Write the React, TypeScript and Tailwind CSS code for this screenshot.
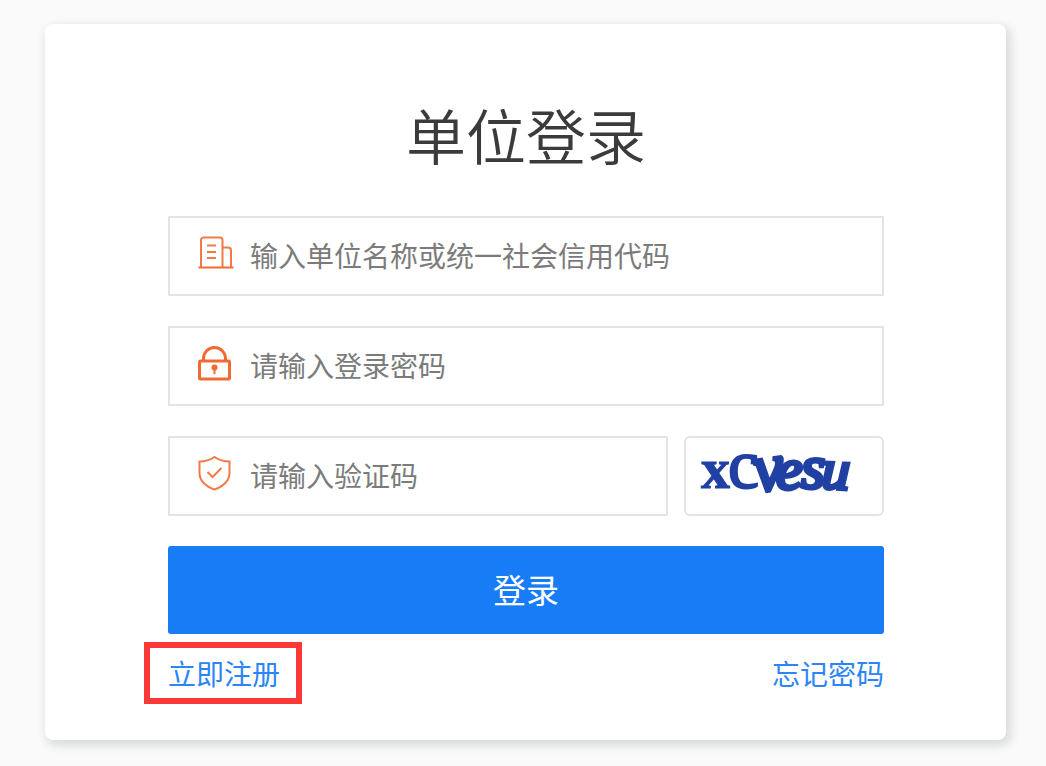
import type { ReactNode } from "react";

function BuildingIcon() {
  return (
    <svg width="36" height="36" viewBox="0 0 36 36" fill="none" stroke="#f27a47" strokeWidth="2" aria-hidden="true">
      <path d="M3 32V4a2.500 2.500 0 0 1 2.500-2.500H22a2.500 2.500 0 0 1 2.500 2.500V32" />
      <path d="M24.500 11.500H30a3 3 0 0 1 3 3v17" />
      <path d="M9 9.500h9M9 16h9M9 22h9" />
      <path d="M.500 31.500h35" stroke="#f26a32" />
    </svg>
  );
}

function LockIcon() {
  return (
    <svg width="36" height="36" viewBox="0 0 36 36" fill="none" stroke="#f26a32" strokeWidth="3" aria-hidden="true">
      <rect x="1.500" y="15" width="30" height="18" rx="1" />
      <path d="M5.500 14.500v-2a11 11 0 0 1 22 0v2" />
      <circle cx="16.500" cy="21.500" r="3" fill="#f26a32" stroke="none" />
      <path d="M16.500 21.500v6.500" strokeWidth="2" />
    </svg>
  );
}

function ShieldIcon() {
  return (
    <svg width="36" height="36" viewBox="0 0 36 36" fill="none" stroke="#f27a47" strokeWidth="2" aria-hidden="true">
      <path d="M16.500 1C12 4 7 5.500 1.500 5.500V17c0 8 7 13.500 15 16.500 8-3 15-8.500 15-16.500V5.500c-5.500 0-10.500-1.500-15-4.500Z" />
      <path d="m9.500 16 5 5 9-9" />
    </svg>
  );
}

function Captcha() {
  return (
    <svg
      className="h-full w-full overflow-visible font-['Liberation_Serif',serif] font-bold"
      viewBox="0 0 196 76"
      fill="#2140a3"
      stroke="#2140a3"
      role="img"
      aria-label="xcvesu"
    >
      <text x="15" y="50" fontSize="58">x</text>
      <text x="42" y="50" fontSize="70" className="font-normal" strokeWidth="2">c</text>
      <text x="70" y="54" fontSize="68" fontStyle="italic" className="font-normal" strokeWidth="4" transform="rotate(-8 70 54)">v</text>
      <text x="90" y="51" fontSize="60" fontStyle="italic" className="font-normal" strokeWidth="4">e</text>
      <text x="115" y="50" fontSize="62" fontStyle="italic" className="font-normal" strokeWidth="4">s</text>
      <text x="135" y="50" fontSize="56" fontStyle="italic" className="font-normal" strokeWidth="4" transform="rotate(3 135 50)">u</text>
    </svg>
  );
}

type FieldProps = {
  id: string;
  type?: string;
  label: string;
  icon: ReactNode;
};

function Field({ id, type = "text", label, icon }: FieldProps) {
  return (
    <div className="flex h-20 min-w-0 flex-1 items-center border-2 border-[#e4e4e4] pl-7">
      <label htmlFor={id} aria-label={label} className="w-[52px] shrink-0 pb-1">
        {icon}
      </label>
      <input
        id={id}
        type={type}
        placeholder={label}
        className="h-full min-w-0 flex-1 bg-transparent pb-[2px] text-[28px] text-[#666] outline-none placeholder:text-[#7b7b7b]"
      />
    </div>
  );
}

export default function App() {
  return (
    <main className="min-h-screen bg-[#fafafa] pt-6 pr-10 pb-[26px] pl-[45px] font-['Noto_Sans_CJK_SC',sans-serif]">
      <section className="rounded-lg bg-white pt-[70px] pr-[122px] pb-9 pl-[123px] shadow-[3px_4px_10px_2px_#d8dddb]">
        <h1 className="mb-[42px] text-center text-[60px] leading-[80px] font-[350] text-[#3b3b3b]">单位登录</h1>
        <form className="flex flex-col" onSubmit={(event) => event.preventDefault()}>
          <div className="flex flex-col gap-[30px]">
            <div className="flex">
              <Field id="company" label="输入单位名称或统一社会信用代码" icon={<BuildingIcon />} />
            </div>
            <div className="flex">
              <Field id="password" type="password" label="请输入登录密码" icon={<LockIcon />} />
            </div>
            <div className="flex gap-4">
              <Field id="code" label="请输入验证码" icon={<ShieldIcon />} />
              <button type="button" className="h-20 w-[200px] shrink-0 rounded-md border-2 border-[#e4e4e4]">
                <Captcha />
              </button>
            </div>
            <button type="submit" className="h-[88px] rounded-[3px] bg-[#177cf5] text-[33px] text-white">
              登录
            </button>
          </div>
          <nav className="mt-2 flex items-center justify-between text-[28px] leading-[50px] text-[#2b85f5]">
            <a href="#register" className="-ml-6 border-6 border-[#fc3938] pr-4 pl-[18px]">
              立即注册
            </a>
            <a href="#forgot">忘记密码</a>
          </nav>
        </form>
      </section>
    </main>
  );
}
